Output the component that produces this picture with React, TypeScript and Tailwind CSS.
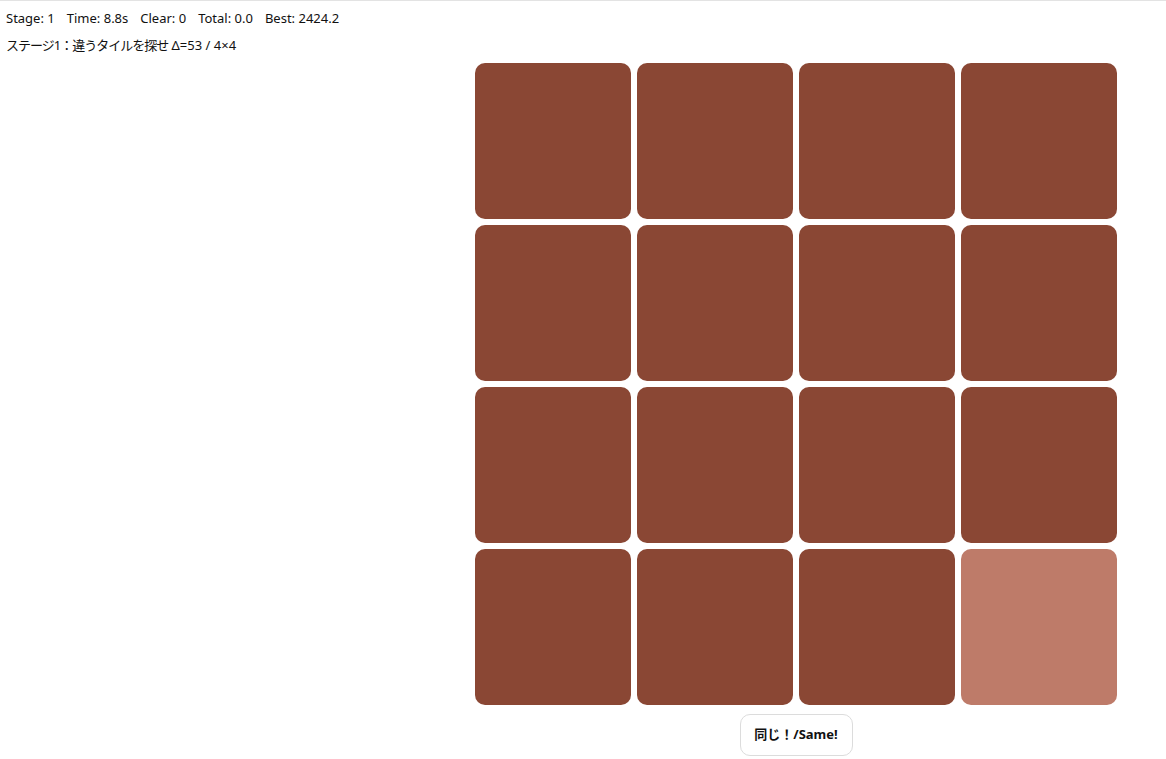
import React from "react";

const DARK = "bg-[#8a4734]";
const LIGHT = "bg-[#be7b69]";

export default function App() {
  const tiles = Array.from({ length: 16 }, (_, i) => i);
  return (
    <div
      className="min-h-[759px] w-full border-t border-[#e3e3e3] bg-white px-[6px] text-[#111]"
      style={{ fontFamily: '"Noto Sans", "Noto Sans CJK JP", sans-serif' }}
    >
      <div className="mt-[8px] flex gap-[12px] text-[13px] leading-[18px]">
        <span>Stage: 1</span>
        <span>Time: 8.8s</span>
        <span>Clear: 0</span>
        <span>Total: 0.0</span>
        <span>Best: 2424.2</span>
      </div>
      <div className="mt-[9px] text-[13px] leading-[18px]">
        <span className="tracking-[-1px]">ステージ1：違うタイルを探せ</span> Δ=53 / 4×4
      </div>
      <div className="mt-[9px] flex flex-col items-center ml-[469px] w-[642px]">
        <div className="grid grid-cols-[repeat(4,156px)] gap-[6px]">
          {tiles.map((i) => (
            <div
              key={i}
              className={`h-[156px] w-[156px] rounded-[10px] ${i === 15 ? LIGHT : DARK}`}
            />
          ))}
        </div>
        <button className="mt-[9px] h-[42px] w-[113px] rounded-[10px] border border-[#dcdcdc] bg-white text-[13px] font-bold text-[#111]">
          同じ！/Same!
        </button>
      </div>
    </div>
  );
}
